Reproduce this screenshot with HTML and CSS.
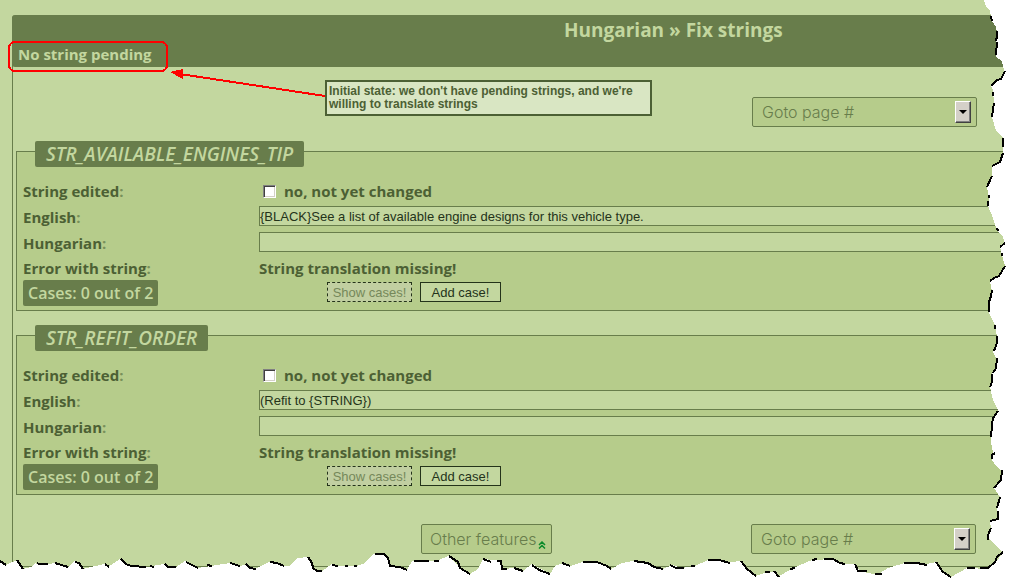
FILE: index.html
```html
<!DOCTYPE html>
<html lang="en">
<head>
<meta charset="utf-8">
<title>Hungarian » Fix strings</title>
<link rel="stylesheet" href="styles.css">
</head>
<body>
<div class="page">
  <main class="panel">
    <header class="header">
      <h1 class="title">Hungarian » Fix strings</h1>
      <p class="status">No string pending</p>
    </header>
    <div class="toolbar toolbar-top">
      <div class="goto">
        <select class="goto-select" aria-label="Goto page"><option>Goto page #</option></select>
        <span class="goto-arrow"></span>
      </div>
    </div>

    <fieldset class="entry">
      <legend class="entry-name">STR_AVAILABLE_ENGINES_TIP</legend>
      <div class="rows">
        <span class="label">String edited<i class="colon">:</i></span>
        <label class="check"><input type="checkbox" class="tick">no, not yet changed</label>
        <label class="label" for="en1">English<i class="colon">:</i></label>
        <input class="field" id="en1" type="text" value="{BLACK}See a list of available engine designs for this vehicle type.">
        <label class="label" for="hu1">Hungarian<i class="colon">:</i></label>
        <input class="field" id="hu1" type="text">
        <span class="label">Error with string<i class="colon">:</i></span>
        <span class="label">String translation missing!</span>
      </div>
      <div class="cases">
        <div><span class="count">Cases: 0 out of 2</span></div>
        <div class="case-buttons">
          <button class="btn btn-off" type="button" disabled>Show cases!</button>
          <button class="btn btn-add" type="button">Add case!</button>
        </div>
      </div>
    </fieldset>

    <fieldset class="entry">
      <legend class="entry-name">STR_REFIT_ORDER</legend>
      <div class="rows">
        <span class="label">String edited<i class="colon">:</i></span>
        <label class="check"><input type="checkbox" class="tick">no, not yet changed</label>
        <label class="label" for="en2">English<i class="colon">:</i></label>
        <input class="field" id="en2" type="text" value="(Refit to {STRING})">
        <label class="label" for="hu2">Hungarian<i class="colon">:</i></label>
        <input class="field" id="hu2" type="text">
        <span class="label">Error with string<i class="colon">:</i></span>
        <span class="label">String translation missing!</span>
      </div>
      <div class="cases">
        <div><span class="count">Cases: 0 out of 2</span></div>
        <div class="case-buttons">
          <button class="btn btn-off" type="button" disabled>Show cases!</button>
          <button class="btn btn-add" type="button">Add case!</button>
        </div>
      </div>
    </fieldset>

    <div class="toolbar toolbar-bottom">
      <button class="features" type="button">Other features
        <svg class="chevrons" width="8" height="8" viewBox="0 0 8 8"><path d="M1 4 4 1 7 4M1 7.500 4 4.500 7 7.500" fill="none" stroke="#0b8a2a" stroke-width="1.500"/></svg>
      </button>
      <div class="goto">
        <select class="goto-select" aria-label="Goto page"><option>Goto page #</option></select>
        <span class="goto-arrow"></span>
      </div>
    </div>
  </main>

  <svg class="overlay" viewBox="0 0 1009 580" preserveAspectRatio="none" aria-hidden="true">
    <path class="paper" d="M1009 0H984L986 7 990 11 991 16 992 21 996 27 997 33 996 50 996 57 1002 61 1003 67 1005 72 1001 79 997 80 991 86 993 90 994 103 992 117 996 131 1003 138 1003 153 1000 162 992 166 992 176 987 187 989 197 988 206 993 218 997 230 1003 237 1005 243 1000 247 1002 255 1005 266 999 276 990 281 992 291 989 300 989 313 995 325 997 337 997 343 993 352 997 360 996 368 992 373 992 382 990 387 993 400 998 410 993 418 991 430 991 442 993 453 992 460 997 467 1002 471 1001 480 994 488 1000 497 997 508 998 518 990 521 991 528 988 538 1003 552 997 561 988 569 967 568 951 577 943 572 936 562 927 564 905 563 888 568 877 575 860 571 855 564 845 564 833 559 812 560 793 568 778 577 775 572 767 572 756 576 747 569 741 561 730 562 708 560 695 566 682 568 672 565 663 569 647 563 632 561 622 563 611 569 597 562 583 562 570 566 563 563 555 566 550 574 532 564 523 571 515 568 503 569 501 561 483 559 478 569 470 574 459 567 448 556 437 561 412 561 407 570 390 566 385 554 373 554 365 563 357 566 338 566 332 564 322 571 313 569 308 557 298 558 289 566 284 566 269 562 255 569 246 564 240 566 230 563 198 568 185 561 176 567 168 567 164 564 147 567 130 566 120 559 108 567 104 564 83 569 75 561 68 567 55 563 48 564 37 564 35 563 31 567 23 569 17 560 6 565 0 560V580H1009Z"/>
    <path class="tear" d="M991 16 992 21M997 31V36L996 41M997 42 996 55M1005 71 1001 79 997 80 991 86M993 92V96M994 103 993 109 992 117M1003 138V147M1003 153 1000 162 992 166M992 176 987 187M989 195V198M988 201V206M997 228 998 231M1005 243 1000 247M1002 253V256M1005 266 999 276 994 278 990 281M992 290 991 296 989 302V312M995 325V329M997 336V343L994 351M997 358 996 368 993 373M992 374V382L990 387M998 411 993 418 992 425 991 437M995 453 992 455V459M1002 470 1001 480 994 488M1000 497 997 508M998 511V519L990 521M991 528 988 535V540M1003 552 997 557 995 562 988 568 980 568M975 568 967 568"/>
    <path class="tear" d="M0 561 6 565M17 560 23 569M37 563 39 564H48M55 563 68 567M75 562 79 563 83 569M105 564 109 567M121 559 126 564 131 566 146 567M150 566 154 567M165 564 168 567H176M186 562 198 568M207 565 212 566M230 563 240 566M246 564 250 568 256 569M270 562 277 563 284 566M308 557 312 563 313 568 317 571H322M332 565 338 566M345 566H348M354 566H357M375 554H384L388 558 390 566 400 567 407 570M414 561H429M434 561H439M449 556 458 562 460 568 470 574M483 559 491 562M497 561H501L502 569 507 569M514 568 523 571M532 565 539 570 550 574M562 563 570 566M583 562H597L607 566 611 569M634 561 648 563 654 567 663 569M670 565 676 568 684 568M691 566H695M708 560H719L730 563M741 561 747 569 756 576M765 572H770M774 571 779 577M790 569 795 568M812 560 817 559M824 559 833 559 840 563 845 564M855 564 858 571 867 571M875 574 882 574M904 563 917 563 927 565M936 562 943 572 951 577"/>
    <rect class="mark" x="9" y="42" width="158" height="29" rx="6"/>
    <path class="mark" d="M325 96 180 74"/>
    <path class="arrowhead" d="M170 72 183 69V79Z"/>
  </svg>
  <aside class="callout">Initial state: we don't have pending strings, and we're willing to translate strings</aside>
</div>
</body>
</html>
```
FILE: styles.css
```css
* { box-sizing: border-box; }
body { margin: 0; background: #fff; color: #4c6034; font-family: "Open Sans", sans-serif; }
.page { position: relative; min-height: 100vh; overflow: hidden; padding: 15px 0 0 12px; background: #c3d79f; }
.panel { border: 1px solid #687d4b; border-width: 0 0 1px 1px; border-radius: 4px 0 0 0; }
.header { height: 52px; padding-left: 6px; margin-left: -1px; background: #687d4b; color: #c3d79f; border-radius: 3px 0 0 3px; }
.title { margin: 0; padding-left: 546px; font-size: 19px; line-height: 30px; font-weight: 700; white-space: nowrap; }
.status { margin: 0; font-size: 15px; line-height: 18px; font-weight: 700; }
.toolbar { display: flex; justify-content: flex-end; padding-right: 32px; }
.toolbar-top { padding-top: 30px; margin-bottom: 24px; }
.toolbar-bottom { gap: 199px; padding-top: 5px; padding-bottom: 12px; padding-right: 33px; }
.goto { position: relative; width: 225px; }
.goto-select, .features { height: 30px; border: 1px solid #687d4b; border-radius: 2px; background: #b6cc8b; color: #687d4b; font: 300 16px Inter, sans-serif; }
.goto-select { display: block; appearance: none; width: 100%; padding: 0 9px; }
.goto-arrow { position: absolute; top: 4px; right: 6px; width: 16px; height: 22px; background: #d4d0c8; border: 1px solid; border-color: #fff #404040 #404040 #fff; box-shadow: inset -1px -1px #808080; pointer-events: none; }
.goto-arrow::after { content: ""; position: absolute; left: 3px; top: 8px; border: 4px solid transparent; border-top-color: #000; border-bottom: 0; }
.features { display: flex; align-items: center; justify-content: space-between; width: 131px; padding: 0 5px 0 8px; white-space: nowrap; }
.chevrons { margin-top: 12px; }
.entry { margin: 0 0 24px 3px; padding: 0 0 4px 6px; min-width: 0; border: 1px solid #687d4b; border-right: 0; background: #b6cc8b; }
.entry-name { float: left; margin: -11px 0 0 12px; padding: 0 11px; height: 26px; line-height: 26px; border-radius: 2px; background: #687d4b; color: #c3d79f; font-size: 19px; font-style: italic; font-weight: 600; }
.rows { clear: both; display: grid; grid-template-columns: 236px 1fr; grid-template-rows: 26px 26px 26px 24px; align-items: center; padding-top: 11px; }
.label, .check { font-size: 15px; line-height: 24px; font-weight: 700; }
.colon { font-style: normal; color: #78905a; }
.check { display: flex; align-items: center; gap: 8px; padding-left: 4px; }
.tick { appearance: none; width: 13px; height: 13px; margin: 0; background: #fff; border: 1px solid; border-color: #808080 #fff #fff #808080; box-shadow: inset 1px 1px #404040, inset -1px -1px #d4d0c8; }
.field { align-self: start; width: 100%; height: 20px; margin: 2px 0 0; padding: 0; border: 1px solid #687d4b; border-right: 0; background: #c3d79f; color: #24331a; font: 13px "Liberation Sans", sans-serif; }
.cases { display: grid; grid-template-columns: 236px 1fr; }
.count { display: inline-block; height: 26px; padding: 0 5px; line-height: 26px; border-radius: 2px; background: #687d4b; color: #c3d79f; font-size: 16px; font-weight: 600; }
.case-buttons { display: flex; gap: 8px; padding: 2px 0 0 68px; }
.btn { height: 20px; padding: 0; border: 1px solid #24331a; background: #c3d79f; color: #24331a; font: 13px "Liberation Sans", sans-serif; }
.btn-off { width: 85px; border-style: dashed; color: #75885a; background: #c1cfa1; }
.btn-add { width: 81px; }
.overlay { position: absolute; inset: 0; width: 100%; height: 100%; pointer-events: none; shape-rendering: crispEdges; }
.paper { fill: #fff; }
.tear { fill: none; stroke: #000; stroke-width: 2; }
.mark { fill: none; stroke: #f00; stroke-width: 2; }
.arrowhead { fill: #f00; }
.callout { position: absolute; left: 325px; top: 80px; width: 327px; padding: 3px 2px; border: 2px solid #4c6034; background: #d9e6c3; color: #4c6034; font: 700 12px/13px "Liberation Sans", sans-serif; }
```
